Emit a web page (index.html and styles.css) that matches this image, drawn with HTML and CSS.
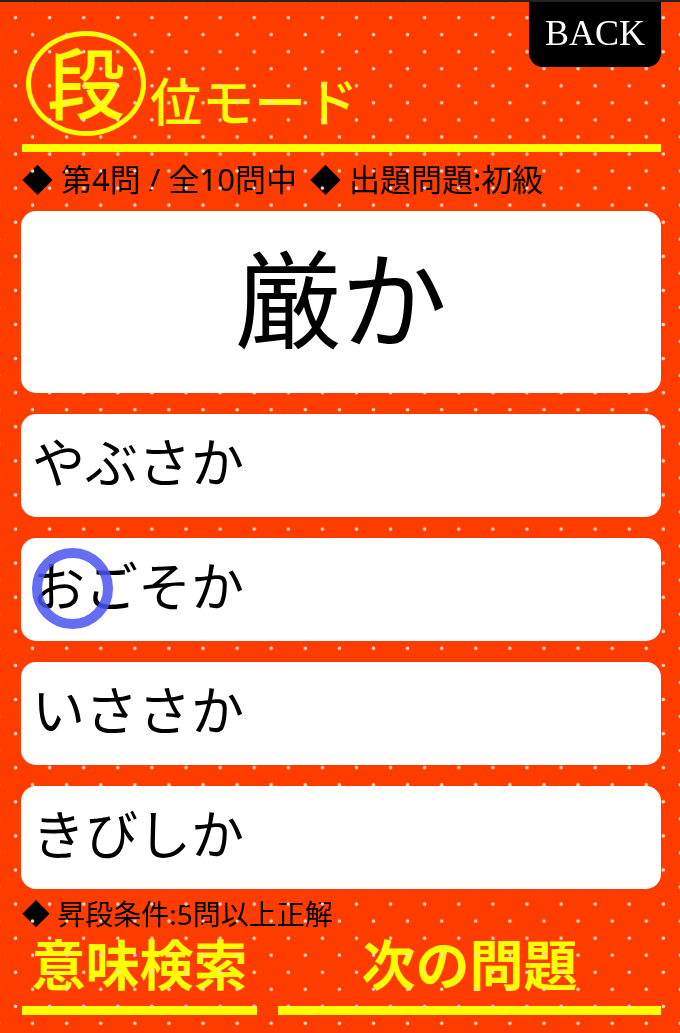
FILE: index.html
```html
<!DOCTYPE html>
<html lang="ja">
<head>
    <meta charset="UTF-8">
    <meta name="viewport" content="width=device-width, initial-scale=1.0">
    <title>段位モード</title>
    <link rel="stylesheet" href="styles.css">
</head>
<body>

<div class="screen">
    <div class="back-button">BACK</div>

    <div class="title-bar">
        <div class="title-badge"><span class="title-kanji">段</span></div>
        <div class="title-text">位モード</div>
    </div>

    <div class="status-line">
        <span>◆</span> 第4問 / 全10問中 <span class="status-second">◆</span> 出題問題:初級
    </div>

    <div class="card-list">
        <div class="card question-card">厳か</div>
        <div class="card answer-card">やぶさか</div>
        <div class="card answer-card">
            おごそか
            <div class="touch-ring"></div>
        </div>
        <div class="card answer-card">いささか</div>
        <div class="card answer-card">きびしか</div>
    </div>

    <div class="condition-line"><span>◆</span> 昇段条件:5問以上正解</div>

    <div class="footer-buttons">
        <div class="footer-button">意味検索</div>
        <div class="footer-button">次の問題</div>
    </div>

    <div class="dot-overlay"></div>
</div>

</body>
</html>
```

FILE: styles.css
```css
html, body {
    margin: 0;
    padding: 0;
    height: 1033px;
    overflow: hidden;
    background: #ff3c00;
}

.screen {
    position: relative;
    box-sizing: border-box;
    width: 680px;
    height: 1033px;
    padding: 0 19px 0 21px;
    background: #ff3c00;
    border-top: 2px solid #222;
    color: #000;
    font-family: "Noto Sans", "Noto Sans CJK JP", sans-serif;
    filter: blur(0.7px);
}

/* dots also run over the title and labels, only cards sit above them */
.dot-overlay {
    position: absolute;
    inset: 0;
    z-index: 1;
    pointer-events: none;
    background-image:
        radial-gradient(circle, #ffd9c4 1.3px, rgba(255, 217, 196, 0) 2.2px),
        radial-gradient(circle, #ffd9c4 1.3px, rgba(255, 217, 196, 0) 2.2px);
    background-size: 34.1px 34.1px;
    background-position: -1.5px -1.4px, 15.5px 15.6px;
}

.back-button {
    position: absolute;
    top: 0;
    left: 529px;
    z-index: 2;
    box-sizing: border-box;
    width: 132px;
    height: 65px;
    padding-bottom: 3px;
    display: flex;
    align-items: center;
    justify-content: center;
    background: #000;
    border-radius: 0 0 14px 14px;
    color: #fff;
    font-family: "Liberation Serif", serif;
    font-size: 36px;
    line-height: 1;
}

.title-bar {
    height: 134px;
    box-sizing: border-box;
    padding: 29px 0 0 5px;
    display: flex;
    align-items: flex-start;
}

.title-badge {
    box-sizing: border-box;
    width: 120px;
    height: 105px;
    display: flex;
    align-items: center;
    justify-content: center;
    border: 5px solid #ffff00;
    border-radius: 50%;
    color: #ffff00;
}

.title-kanji {
    font-size: 78px;
    font-weight: 500;
    line-height: 1;
}

.title-text {
    margin: 45px 0 0 4px;
    color: #ffff00;
    font-size: 52px;
    font-weight: 500;
    line-height: 1;
}

.status-line {
    margin: 8px 0 0 1px;
    padding-top: 8px;
    height: 67px;
    box-sizing: border-box;
    border-top: 8px solid #ffff00;
    font-size: 31px;
    line-height: 38px;
    white-space: nowrap;
}

.status-second {
    margin-left: 5px;
}

.card-list {
    position: relative;
    z-index: 2;
    display: flex;
    flex-direction: column;
    gap: 21px;
}

.card {
    position: relative;
    display: flex;
    align-items: center;
    background: #fff;
    border-radius: 15px;
}

.question-card {
    box-sizing: border-box;
    height: 182px;
    padding-bottom: 6px;
    justify-content: center;
    font-size: 106px;
    line-height: 1;
}

.answer-card {
    box-sizing: border-box;
    height: 103px;
    padding: 0 0 6px 11px;
    font-size: 53px;
    line-height: 1;
}

.touch-ring {
    position: absolute;
    left: 11px;
    top: 10px;
    box-sizing: border-box;
    width: 81px;
    height: 81px;
    border: 10px solid rgba(74, 85, 240, 0.85);
    border-radius: 50%;
}

.condition-line {
    margin: 7px 0 0 1px;
    font-size: 28px;
    line-height: 36px;
    white-space: nowrap;
}

.footer-buttons {
    display: grid;
    grid-template-columns: 235px 383px;
    gap: 21px;
    margin-left: 1px;
}

.footer-button {
    height: 74px;
    border-bottom: 9px solid #ffff00;
    color: #ffff00;
    font-size: 54px;
    font-weight: 700;
    line-height: 66px;
    text-align: center;
}
```
